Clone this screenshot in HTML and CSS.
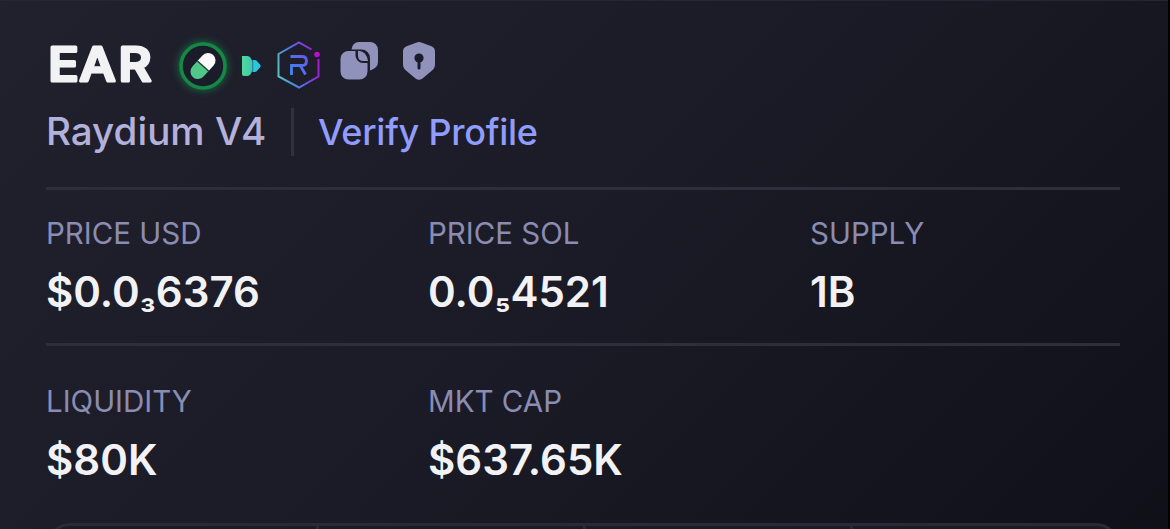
FILE: index.html
```
<!DOCTYPE html>
<html lang="en">
<head>
    <meta charset="UTF-8">
    <title>EAR - Raydium V4</title>
    <link rel="stylesheet" href="styles.css">
</head>
<body>
    <div class="panel">
        <!-- Token name and badges -->
        <div class="title-row">
            <h1>
                <svg class="name" viewBox="0 0 129 56">
                    <text transform="scale(1.1 1)" x="2 30.500 66" y="43.500">EAR</text>
                </svg>
            </h1>
            <svg class="pill" viewBox="0 0 56 56">
                <circle cx="28" cy="29" r="22" fill="#1b1c29" stroke="#158846" stroke-width="3.6"/>
                <g transform="rotate(-48 28 29)">
                    <path d="M28 21.500H20.500a7.500 7.500 0 0 0 0 15H28z" fill="#50c788"/>
                    <path d="M28 21.500H35.500a7.500 7.500 0 0 1 0 15H28z" fill="#fafafa"/>
                    <path d="M28 21.500v15" stroke="#234037" stroke-width="1.5"/>
                </g>
            </svg>
            <svg class="arrow" viewBox="0 0 20 22">
                <defs>
                    <linearGradient id="teal" x1="0" y1="0" x2="1" y2="0">
                        <stop offset="0" stop-color="#50d99a"/>
                        <stop offset="1" stop-color="#40c4b6"/>
                    </linearGradient>
                </defs>
                <path d="M10.500 5h2.500q1.500 0 2.500 1.800l2.700 3q.8 1.200 0 2.400l-2.700 3q-1 1.800-2.500 1.800h-2.500z" fill="#2ac6df"/>
                <path d="M0 1h5q3 0 4.300 3l1.200 3v8l-1.200 3q-1.300 3-4.300 3H2q-2 0-2-2z" fill="url(#teal)"/>
                <path d="M10.800 5.500v11" stroke="#207c91" stroke-width=".8"/>
            </svg>
            <svg class="raydium" viewBox="0 0 44 48">
                <defs>
                    <linearGradient id="ray" gradientUnits="userSpaceOnUse" x1="0" y1="30" x2="43" y2="18">
                        <stop offset="0" stop-color="#59c4c9"/>
                        <stop offset=".25" stop-color="#488fd8"/>
                        <stop offset=".55" stop-color="#655be8"/>
                        <stop offset="1" stop-color="#b50dd5"/>
                    </linearGradient>
                    <linearGradient id="rayr" x1="0" y1="1" x2="1" y2="0">
                        <stop offset="0" stop-color="#3d8af0"/>
                        <stop offset="1" stop-color="#6658ea"/>
                    </linearGradient>
                </defs>
                <path d="M34.500 8.500L22 1.500L1.500 13v22.500L22 46.500L41.500 35.500V18" fill="none" stroke="url(#ray)" stroke-width="2"/>
                <circle cx="40" cy="13.500" r="2.800" fill="#b80dd2"/>
                <path d="M13.500 15.500h11.500q4.500 0 4.500 4.500t-4.500 4.500H14.500v9.500M23.500 25l5 8.500" fill="none" stroke="url(#rayr)" stroke-width="2.800"/>
            </svg>
            <svg class="copy" viewBox="0 0 40 40">
                <path d="M19 1h11a8 8 0 0 1 8 8v12q0 6-8 8.500V17a8.500 8.500 0 0 0-8.500-8.500h-10Q12.500 1 19 1z"/>
                <path d="M8.500 10h7v4.500a7.500 7.500 0 0 0 7.500 7.500h4.500v8.500a8 8 0 0 1-8 8h-11a8 8 0 0 1-8-8v-12.500a8 8 0 0 1 8-8z"/>
                <path d="M18 9.800q8.500.5 10 10.200h-4.500q-5.500 0-5.500-5.500z"/>
            </svg>
            <svg class="shield" viewBox="0 0 34 40">
                <path d="M14 1.700q3-1.200 6 0l9.500 3.600q3.500 1.500 3.500 5.200v12.500q0 4-3 6.500l-9.500 8q-3.500 2.500-7 0l-9.500-8q-3-2.500-3-6.500V10.500q0-3.700 3.500-5.200z"/>
                <circle class="hole" cx="17" cy="17" r="4.600"/>
                <path class="slot" d="M17 19v8"/>
            </svg>
        </div>

        <div class="sub-row">
            <span class="dex">Raydium V4</span>
            <a class="verify">Verify Profile</a>
        </div>

        <!-- Token stats -->
        <div class="stats">
            <div class="stat">
                <div class="label">PRICE USD</div>
                <div class="value">$0.0<span class="zeros">₃</span>6376</div>
            </div>
            <div class="stat">
                <div class="label">PRICE SOL</div>
                <div class="value">0.0<span class="zeros">₅</span>4521</div>
            </div>
            <div class="stat">
                <div class="label">SUPPLY</div>
                <div class="value">1B</div>
            </div>
        </div>
        <div class="stats second">
            <div class="stat">
                <div class="label">LIQUIDITY</div>
                <div class="value">$80K</div>
            </div>
            <div class="stat">
                <div class="label">MKT CAP</div>
                <div class="value">$637.65K</div>
            </div>
        </div>

        <!-- Top of the interval table -->
        <div class="intervals">
            <div></div>
            <div></div>
            <div></div>
            <div></div>
        </div>
    </div>
</body>
</html>
```

FILE: styles.css
```
* {
    box-sizing: border-box;
}

body {
    margin: 0;
    height: 529px;
    overflow: hidden;
    background-color: #020204;
    font-family: Inter, sans-serif;
}

.panel {
    width: 1168px;
    height: 529px;
    padding: 36px 48px 0 46px;
    overflow: hidden;
    border-top: 1px solid #252632;
    background: linear-gradient(135deg, #20212d 0%, #1a1b26 50%, #0f1018 100%);
}

.title-row {
    display: flex;
    align-items: center;
    height: 56px;
}

.title-row svg {
    display: block;
    flex-shrink: 0;
}

h1 {
    margin: 0;
    font-size: 46px;
    font-weight: 500;
}

.name {
    width: 129px;
    height: 56px;
    fill: #f2f2f4;
    stroke: #f2f2f4;
    stroke-width: 3.2;
    stroke-linejoin: round;
}

.pill {
    width: 56px;
    height: 56px;
    filter: drop-shadow(0 0 4px rgba(22, 150, 76, 0.75));
}

.arrow {
    width: 20px;
    height: 22px;
    margin: 2px 0 0 11px;
}

.raydium {
    width: 44px;
    height: 48px;
    margin-left: 15px;
}

.copy {
    width: 40px;
    height: 40px;
    margin: -8px 0 0 19px;
    fill: #9092bb;
}

.shield {
    width: 34px;
    height: 40px;
    margin: -8px 0 0 22px;
    fill: #9092bb;
}

.hole {
    fill: #1b1c29;
}

.slot {
    fill: none;
    stroke: #1b1c29;
    stroke-width: 3;
    stroke-linecap: round;
}

.sub-row {
    display: flex;
    align-items: center;
    height: 48px;
    margin-top: 15px;
}

.dex {
    width: 248px;
    border-right: 3px solid #30313d;
    font-size: 38.6px;
    line-height: 46px;
    padding-bottom: 2px;
    font-weight: 500;
    color: #b3b1db;
}

.verify {
    margin-left: 24px;
    font-size: 36px;
    line-height: 48px;
    font-weight: 500;
    letter-spacing: -0.25px;
    color: #919cff;
}

.stats {
    display: grid;
    grid-template-columns: 382px 382px 1fr;
    height: 156px;
    margin-top: 31px;
    padding-top: 23px;
    border-top: 3px solid #2d2e39;
}

.second {
    height: 180px;
    margin-top: 0;
    padding-top: 35px;
}

.label {
    font-size: 29.5px;
    line-height: 40px;
    font-weight: 400;
    color: #8b8cb2;
}

.value {
    margin-top: 13px;
    font-size: 42px;
    line-height: 52px;
    font-weight: 600;
    color: #f2f2f5;
}

.zeros {
    font-size: 34.5px;
    line-height: 1;
}

.intervals {
    display: grid;
    grid-template-columns: repeat(4, 1fr);
    height: 80px;
    border: 3px solid #292a35;
    border-radius: 24px;
    background-color: #1b1a26;
}

.intervals div + div {
    border-left: 3px solid #292a35;
}
```
